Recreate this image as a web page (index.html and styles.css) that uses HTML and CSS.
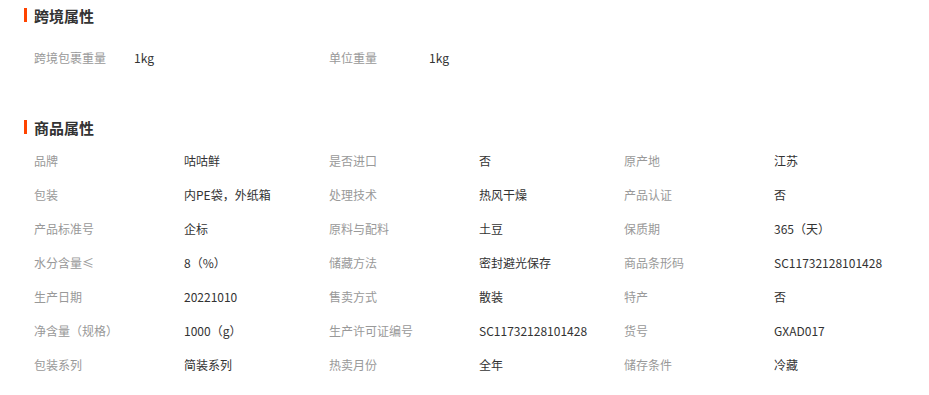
FILE: index.html
```html
<!DOCTYPE html>
<html lang="zh-CN">
<head>
<meta charset="utf-8">
<link rel="stylesheet" href="styles.css">
</head>
<body>
<div class="page">
  <section class="attr attr-cross">
    <h3 class="attr-title">跨境属性</h3>
    <div class="attr-grid">
      <div class="attr-item"><span class="label">跨境包裹重量</span><span class="value">1kg</span></div>
      <div class="attr-item"><span class="label">单位重量</span><span class="value">1kg</span></div>
    </div>
  </section>
  <section class="attr attr-goods">
    <h3 class="attr-title">商品属性</h3>
    <div class="attr-grid">
      <div class="attr-item"><span class="label">品牌</span><span class="value">咕咕鲜</span></div>
      <div class="attr-item"><span class="label">是否进口</span><span class="value">否</span></div>
      <div class="attr-item"><span class="label">原产地</span><span class="value">江苏</span></div>
      <div class="attr-item"><span class="label">包装</span><span class="value">内PE袋，外纸箱</span></div>
      <div class="attr-item"><span class="label">处理技术</span><span class="value">热风干燥</span></div>
      <div class="attr-item"><span class="label">产品认证</span><span class="value">否</span></div>
      <div class="attr-item"><span class="label">产品标准号</span><span class="value">企标</span></div>
      <div class="attr-item"><span class="label">原料与配料</span><span class="value">土豆</span></div>
      <div class="attr-item"><span class="label">保质期</span><span class="value">365（天）</span></div>
      <div class="attr-item"><span class="label">水分含量≤</span><span class="value">8（%）</span></div>
      <div class="attr-item"><span class="label">储藏方法</span><span class="value">密封避光保存</span></div>
      <div class="attr-item"><span class="label">商品条形码</span><span class="value">SC11732128101428</span></div>
      <div class="attr-item"><span class="label">生产日期</span><span class="value">20221010</span></div>
      <div class="attr-item"><span class="label">售卖方式</span><span class="value">散装</span></div>
      <div class="attr-item"><span class="label">特产</span><span class="value">否</span></div>
      <div class="attr-item"><span class="label">净含量（规格）</span><span class="value">1000（g）</span></div>
      <div class="attr-item"><span class="label">生产许可证编号</span><span class="value">SC11732128101428</span></div>
      <div class="attr-item"><span class="label">货号</span><span class="value">GXAD017</span></div>
      <div class="attr-item"><span class="label">包装系列</span><span class="value">简装系列</span></div>
      <div class="attr-item"><span class="label">热卖月份</span><span class="value">全年</span></div>
      <div class="attr-item"><span class="label">储存条件</span><span class="value">冷藏</span></div>
    </div>
  </section>
</div>
</body>
</html>
```
FILE: styles.css
```css
* { box-sizing: border-box; }
html, body { margin: 0; padding: 0; background: #fff; }
body {
  font-family: "Noto Sans CJK SC", "Noto Sans", sans-serif;
  font-size: 12px;
  color: #333;
}
.page { padding: 5px 0 0 24px; }
.attr-title {
  margin: 0;
  display: flex;
  align-items: center;
  gap: 7px;
  height: 20px;
  font-size: 15px;
  font-weight: bold;
  color: #333;
}
.attr-title::before {
  content: "";
  width: 3px;
  height: 14px;
  background: #ff4400;
}
.attr-grid {
  display: grid;
  grid-template-columns: repeat(3, 295px);
  padding-left: 10px;
}
.attr-cross .attr-grid { padding-top: 15px; }
.attr-goods { margin-top: 43px; }
.attr-goods .attr-grid { padding-top: 6px; }
.attr-item {
  display: flex;
  height: 34px;
  align-items: center;
  white-space: nowrap;
}
.label { color: #999; width: 150px; flex: none; }
.attr-cross .label { width: 100px; }
.value { color: #333; }
```
